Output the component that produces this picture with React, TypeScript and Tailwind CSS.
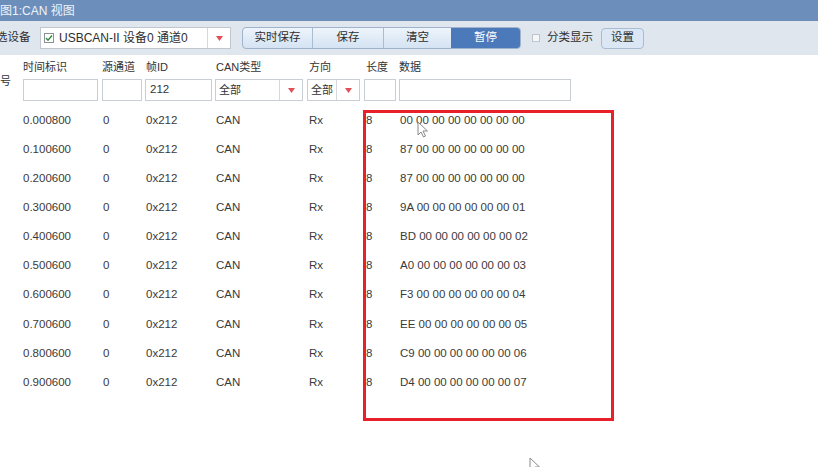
import React from "react";

const rows = [
  ["0.000800", "00 00 00 00 00 00 00 00"],
  ["0.100600", "87 00 00 00 00 00 00 00"],
  ["0.200600", "87 00 00 00 00 00 00 00"],
  ["0.300600", "9A 00 00 00 00 00 00 01"],
  ["0.400600", "BD 00 00 00 00 00 00 02"],
  ["0.500600", "A0 00 00 00 00 00 00 03"],
  ["0.600600", "F3 00 00 00 00 00 00 04"],
  ["0.700600", "EE 00 00 00 00 00 00 05"],
  ["0.800600", "C9 00 00 00 00 00 00 06"],
  ["0.900600", "D4 00 00 00 00 00 00 07"],
];

const cols = "grid grid-cols-[23px_79px_43px_70px_92px_57px_35px_1fr]";

const Arrow = () => (
  <svg width="7" height="5" viewBox="0 0 7 5">
    <path d="M0 0 L7 0 L3.5 5 Z" fill="#e0505a" />
  </svg>
);

const Cursor = ({ className }: { className: string }) => (
  <svg className={className} width="12" height="17" viewBox="0 0 12 17">
    <path d="M1 1 L1 14 L4 11 L6.5 16 L8.5 15 L6 10 L10.5 10 Z" fill="#fff" stroke="#888" strokeWidth="1" />
  </svg>
);

const Combo = ({ label, w, dw }: { label: string; w: string; dw: string }) => (
  <div className={`flex h-[22px] ${w} border border-[#c9ced4] bg-white`}>
    <div className="flex-1 flex items-center pl-[3px]">{label}</div>
    <div className={`${dw} border-l border-[#d5d9de] flex items-center justify-center`}>
      <Arrow />
    </div>
  </div>
);

const App = () => {
  return (
    <div
      className="relative w-[818px] h-[467px] overflow-hidden bg-white text-[#3c3c3c]"
      style={{ fontFamily: '"Liberation Sans", "Noto Sans CJK SC", sans-serif' }}
    >
      {/* title */}
      <div className="h-[21px] bg-[#6b8fba] flex items-center text-[12px] text-[#eef3fa]">
        图1:CAN 视图
      </div>

      {/* toolbar */}
      <div className="h-[34px] bg-[#dfe6ee] flex items-center text-[11.5px] text-[#2e2e2e]">
        <span className="-ml-[4px] w-[44px]">选设备</span>
        <div className="flex h-[22px] w-[191px] border border-[#c0c7cf] bg-white">
          <div className="flex-1 flex items-center pl-[3px] gap-[5px]">
            <span className="w-[10px] h-[10px] border border-[#8a9098] flex items-center justify-center">
              <svg width="8" height="8" viewBox="0 0 8 8">
                <path d="M1 4 L3 6.2 L7 1.5" fill="none" stroke="#2f8a3a" strokeWidth="1.4" />
              </svg>
            </span>
            <span className="text-[12px]">USBCAN-II 设备0 通道0</span>
          </div>
          <div className="w-[23px] border-l border-[#d5d9de] flex items-center justify-center">
            <Arrow />
          </div>
        </div>
        <div className="ml-[11px] flex h-[22px] w-[279px] rounded-[4px] border border-[#9fb3cc] overflow-hidden bg-gradient-to-b from-[#eef4fb] to-[#d4e3f3]">
          <div className="w-[69px] flex items-center justify-center">实时保存</div>
          <div className="w-[71px] border-l border-[#a9bcd2] flex items-center justify-center">保存</div>
          <div className="w-[68px] border-l border-[#a9bcd2] flex items-center justify-center">清空</div>
          <div className="flex-1 bg-[#4b79b9] text-white flex items-center justify-center">暂停</div>
        </div>
        <span className="ml-[11px] w-[8px] h-[8px] border border-[#bfc4ca] bg-[#f4f6f8]" />
        <span className="ml-[7px]">分类显示</span>
        <div className="ml-[8px] h-[21px] w-[43px] rounded-[4px] border border-[#a9bcd2] bg-[#dbe7f4] flex items-center justify-center">
          设置
        </div>
      </div>

      {/* filter header */}
      <div className={`${cols} grid-rows-[24px_22px] text-[11px] text-[#333]`}>
        <div className="row-span-2 flex items-center pt-[6px]">号</div>
        <div className="flex items-center">时间标识</div>
        <div className="flex items-center">源通道</div>
        <div className="flex items-center pl-[1px]">帧ID</div>
        <div className="flex items-center pl-[1px]">CAN类型</div>
        <div className="flex items-center pl-[2px]">方向</div>
        <div className="flex items-center pl-[2px]">长度</div>
        <div className="flex items-center">数据</div>

        <div className="w-[75px] h-[22px] border border-[#c9ced4]" />
        <div className="w-[40px] h-[22px] border border-[#c9ced4]" />
        <div className="w-[67px] h-[22px] border border-[#c9ced4] flex items-center pl-[4px] text-[11.5px]">212</div>
        <Combo label="全部" w="w-[88px]" dw="w-[23px]" />
        <Combo label="全部" w="w-[53px]" dw="w-[23px]" />
        <div className="w-[32px] h-[22px] border border-[#c9ced4]" />
        <div className="w-[172px] h-[22px] border border-[#c9ced4]" />
      </div>

      {/* rows */}
      <div className="mt-[5px] text-[11.5px] text-[#3a3a3a]">
        {rows.map(([t, d]) => (
          <div key={t} className={`${cols} h-[29.1px] items-center`}>
            <div />
            <div>{t}</div>
            <div className="pl-[1px]">0</div>
            <div className="pl-[1px]">0x212</div>
            <div className="pl-[1px]">CAN</div>
            <div className="pl-[2px]">Rx</div>
            <div className="pl-[2px]">8</div>
            <div className="pl-[1px]">{d}</div>
          </div>
        ))}
      </div>

      {/* highlight */}
      <div className="absolute left-[363px] top-[110px] w-[251px] h-[311px] border-[3px] border-[#e8202a]" />
      <Cursor className="absolute left-[417px] top-[121px]" />
      <Cursor className="absolute left-[529px] top-[457px]" />
    </div>
  );
};

export default App;
